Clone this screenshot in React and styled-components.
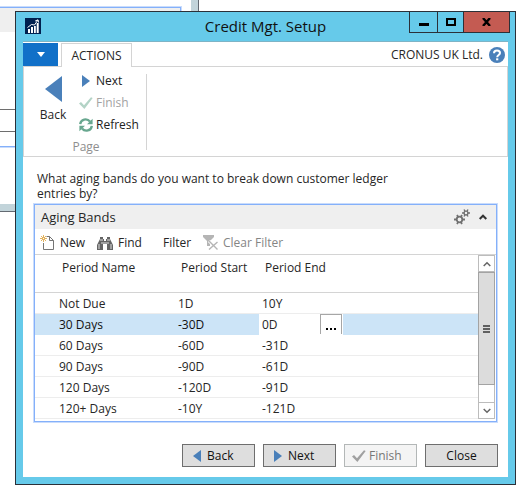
import React, { useState } from "react";
import styled, { createGlobalStyle, css } from "styled-components";

const GlobalStyle = createGlobalStyle`
  *, *::before, *::after { box-sizing: border-box; }
  body {
    margin: 0;
    background: #fff;
    color: #262626;
    font-family: "Open Sans", "Noto Sans", "Liberation Sans", sans-serif;
    font-size: 12px;
    line-height: 15px;
  }
  button, input { font: inherit; color: inherit; margin: 0; }
  svg { display: block; flex: none; }
`;

const Desktop = styled.div`
  position: relative;
  min-height: 100vh;
  padding: 11px 2px 11px 15px;
`;

/* Parent window, partly covered by the dialog */
const ParentWindow = styled.div`
  position: absolute;
  top: 0;
  left: 0;
  width: 199px;
  height: 212px;
  padding-top: 7px;
  border: solid #636a72;
  border-width: 0 1px 1px 0;
  box-shadow: inset -7px -7px 0 #c2d4da;
`;

const ParentPanel = styled.div`
  width: 181px;
  height: 140px;
  border: solid #84b0fa;
  border-width: 1px 1px 1px 0;
  box-shadow: 0 0 0 1px #c9dcfc;
`;

const ParentPanelHeader = styled.div`
  height: 24px;
  background: #efefef;
`;

const ParentField = styled.div`
  height: 23px;
  margin-top: 77px;
  border: solid #6e6e6e;
  border-width: 1px 0;
`;

const Dialog = styled.section`
  position: relative;
  display: flex;
  flex-direction: column;
  border: 1px solid #2b3038;
  background: #66caea;
  padding: 0 7px 7px;
`;

const TitleBar = styled.header`
  display: grid;
  grid-template-columns: 1fr auto 1fr;
  height: 29px;
`;

const AppIcon = styled.span`
  padding: 6px 2px;
`;

const Title = styled.h1`
  margin: 0;
  font-size: 15px;
  font-weight: 400;
  line-height: 29px;
  color: #111;
`;

const WindowButtons = styled.div`
  display: flex;
  justify-self: end;
  height: 21px;
  margin-right: -2px;
  border: solid #2b3038;
  border-width: 0 1px 1px;
`;

const WindowButton = styled.button`
  display: flex;
  align-items: center;
  justify-content: center;
  width: ${(p) => p.$width}px;
  padding: 0;
  border: solid #2b3038;
  border-width: 0 0 0 ${(p) => (p.$first ? 0 : 1)}px;
  background: ${(p) => (p.$close ? "#c45b52" : "transparent")};
`;

const Content = styled.div`
  display: flex;
  flex-direction: column;
  background: #fff;
  border-top: 1px solid #7eb4c6;
`;

const TabRow = styled.div`
  display: flex;
  align-items: flex-end;
  height: 24px;
`;

const FileMenu = styled.button`
  display: flex;
  align-items: center;
  justify-content: center;
  width: 35px;
  height: 23px;
  margin-right: 3px;
  padding: 0;
  border: 0;
  background: #1170c8;
`;

const Tab = styled.button`
  width: 71px;
  height: 24px;
  margin-bottom: -1px;
  padding: 0;
  border: 1px solid #d4d4d4;
  border-bottom: 0;
  background: #fff;
  z-index: 1;
`;

const Company = styled.div`
  display: flex;
  align-items: center;
  gap: 6px;
  height: 23px;
  margin-left: auto;
  padding-right: 3px;
`;

const HelpButton = styled.button`
  padding: 0;
  border: 0;
  background: none;
`;

const Ribbon = styled.div`
  display: flex;
  height: 91px;
  padding: 7px 0 6px;
  border: 1px solid #d4d4d4;
`;

const RibbonGroup = styled.fieldset`
  display: grid;
  grid-template-columns: 52px auto;
  grid-template-rows: 66px auto;
  width: 123px;
  margin: 0;
  padding: 0;
  border: 0;
  border-right: 1px solid #d4d4d4;
`;

const RibbonLabel = styled.span`
  grid-column: 1 / -1;
  line-height: 13px;
  padding-left: 2px;
  text-align: center;
  color: #8e8e8e;
`;

const LargeAction = styled.button`
  display: flex;
  flex-direction: column;
  align-items: center;
  gap: 5px;
  padding: 2px 0 0 6px;
  border: 0;
  background: none;
`;

const SmallActions = styled.div`
  display: flex;
  flex-direction: column;
`;

const SmallAction = styled.button`
  display: flex;
  align-items: center;
  gap: 3px;
  height: 22px;
  padding: 0 0 8px 2px;
  border: 0;
  background: none;
  line-height: 14px;
  color: ${(p) => (p.disabled ? "#a3a3a3" : "#222")};
`;

const IconSlot = styled.span`
  display: flex;
  justify-content: center;
  width: 15px;
`;

const Body = styled.main`
  padding: 14px 10px 10px;
`;

const Question = styled.p`
  max-width: 360px;
  margin: 0 0 3px;
  padding-left: 4px;
`;

const Panel = styled.section`
  border: 1px solid #84b0fa;
  margin: 0 1px;
  box-shadow: 0 0 0 1px #c9dcfc;
`;

const PanelHeader = styled.header`
  display: flex;
  align-items: center;
  height: 24px;
  padding: 0 9px 0 6px;
  background: #efefef;
`;

const PanelTitle = styled.h2`
  margin: 0 auto 0 0;
  font-size: 13px;
  font-weight: 400;
  line-height: 22px;
`;

const IconButton = styled.button`
  display: flex;
  align-items: center;
  margin-left: 9px;
  padding: 0;
  border: 0;
  background: none;
`;

const Toolbar = styled.div`
  display: flex;
  align-items: center;
  height: 26px;
  padding: 2px 0 0 5px;
  border-bottom: 1px solid #d4d4d4;
`;

const ToolButton = styled.button`
  display: flex;
  align-items: center;
  gap: 5px;
  width: ${(p) => p.$width}px;
  padding: 0;
  border: 0;
  background: none;
  white-space: nowrap;
  color: ${(p) => (p.disabled ? "#858585" : "#262626")};
`;

const GridArea = styled.div`
  display: flex;
  align-items: flex-start;
  padding: 0 1px 2px 0;
`;

const BandTable = styled.table`
  flex: 1;
  width: 100%;
  table-layout: fixed;
  border-collapse: separate;
  border-spacing: 0;
`;

const Column = styled.col`
  width: ${(p) => (p.$width ? `${p.$width}px` : "auto")};
`;

const HeadCell = styled.th`
  height: 38px;
  padding: 5px 0 0 ${(p) => (p.$first ? 27 : 6)}px;
  border-bottom: 1px solid #d4d4d4;
  font-weight: 400;
  text-align: left;
  vertical-align: top;
`;

const Cell = styled.td`
  height: 21px;
  padding: 0 0 0 ${(p) => (p.$first ? 24 : 3)}px;
  border-bottom: 1px solid #ededed;
  ${(p) =>
    p.$selected &&
    css`
      background: #cce4f7;
      border-color: #cce4f7;
      color: #111;
    `}
  ${(p) =>
    p.$editing &&
    css`
      padding: 0;
      background: #fff;
      border-color: #fff;
    `}
`;

const Editor = styled.div`
  display: flex;
  height: 20px;
`;

const EditInput = styled.input`
  flex: 1;
  min-width: 0;
  padding: 0 0 0 3px;
  border: 0;
  outline: 0;
  background: transparent;
`;

const LookupButton = styled.button`
  display: flex;
  align-items: flex-end;
  justify-content: center;
  width: 22px;
  margin: 0 1px 0 0;
  padding: 0 0 4px;
  border: 1px solid #a6a6a6;
  border-bottom: 0;
  background: #fff;
`;

const ScrollBar = styled.div`
  display: flex;
  flex-direction: column;
  align-self: stretch;
  width: 17px;
  background: #fff;
  border: solid #bcbcbc;
  border-width: 0 1px;
`;

const ScrollButton = styled.button`
  display: flex;
  align-items: center;
  justify-content: center;
  height: 17px;
  padding: 0;
  border: solid #bcbcbc;
  border-width: 1px 0;
  background: #fff;
`;

const ScrollThumb = styled.div`
  display: flex;
  align-items: center;
  justify-content: center;
  height: 113px;
  margin: 0 -1px auto;
  border: 1px solid #a3a3a3;
  background: #dcdcdc;
`;

const Footer = styled.footer`
  display: flex;
  justify-content: flex-end;
  gap: 8px;
  margin-top: 22px;
`;

const FooterButton = styled.button`
  display: flex;
  align-items: center;
  justify-content: ${(p) => (p.$plain ? "center" : "flex-start")};
  gap: 3px;
  width: 73px;
  height: 23px;
  padding: 0 ${(p) => (p.$plain ? 0 : 6)}px;
  border: 1px solid ${(p) => (p.disabled ? "#b3b7b7" : "#6e6e6e")};
  background: ${(p) => (p.disabled ? "#f4f4f4" : "#dedede")};
  color: ${(p) => (p.disabled ? "#777" : "#111")};
`;

const Triangle = ({ size, left }) => (
  <svg width={size === 26 ? 17 : 8} height={size} viewBox="0 0 8 12" preserveAspectRatio="none" fill="#4a80ba">
    <path d={left ? "M8 0v12L0 6z" : "M0 0v12l8-6z"} />
  </svg>
);

const Check = ({ color }) => (
  <svg width="14" height="12" viewBox="0 0 14 12" fill={color}>
    <path d="M0 6.5 2 5l3 3.2L12 .2 13.7 1 5.4 12z" />
  </svg>
);

const AppLogo = () => (
  <svg width="16" height="16" viewBox="0 0 16 16">
    <path fill="#00204f" d="M0 0h16v16H0z" />
    <path fill="#fff" d="M3 11h2v4H3zM6 9h2v6H6zM9 8h1.8v7H9zM11.7 5h2v10h-2z" />
    <path fill="none" stroke="#fff" d="m2.5 9.5 4-3 3 .5 3.5-5M10.2 3 13 1.8l.6 2.7" />
  </svg>
);

const HelpIcon = () => (
  <svg width="16" height="16" viewBox="0 0 16 16">
    <circle cx="8" cy="8" r="8" fill="#4a80ba" />
    <path fill="none" stroke="#fff" strokeWidth="2" d="M5 6.2C5 2.5 11 2.7 11 6c0 2-2.8 2-2.8 4.2" />
    <path fill="#fff" d="M7.1 11.3h2.2v2H7.1z" />
  </svg>
);

const RefreshIcon = () => (
  <svg width="14" height="14" viewBox="0 0 14 14">
    <g fill="none" stroke="#68a78f" strokeWidth="2.3">
      <path d="M1.2 6.2C1.7 1 8-.1 11 3.5" />
      <path d="M12.8 7.8C12.3 13 6 14.1 3 10.5" />
    </g>
    <path fill="#68a78f" d="M13.6.8v5.5H8zM.4 13.2V7.7H6z" />
  </svg>
);

const NewIcon = () => (
  <svg width="15" height="16" viewBox="0 0 15 16">
    <path fill="none" stroke="#757575" d="M3.5 8v6.5h10v-9l-4-4h-3M9.5 1.5v4h4" />
    <path fill="none" stroke="#e3b35f" d="M3.5 0v7M0 3.5h7M1 1l5 5M6 1 1 6" />
    <path fill="#fff" d="M3 3h1v1H3z" />
  </svg>
);

const FindIcon = () => (
  <svg width="16" height="14" viewBox="0 0 16 14">
    <path fill="#646464" d="M3 1h3v2h1v2h2V3h1V1h3v2l1 2 2 4v5h-6V8H6v6H0V9l2-4 1-2z" />
    <path fill="none" stroke="#fff" strokeWidth=".8" d="M2 8v5M14 8v5M3 4h3M10 4h3M6 7h4M5 6v2M11 6v2" />
  </svg>
);

const ClearFilterIcon = () => (
  <svg width="15" height="15" viewBox="0 0 15 15">
    <path fill="#b5b5b5" d="M0 0h11v2L7 6v5H4V6L0 2z" />
    <path fill="none" stroke="#fff" strokeWidth="3" d="m6 6 8.5 8.5M14.5 7 6 14.5" />
    <path fill="none" stroke="#b5b5b5" strokeWidth="1.4" d="m6 6 8.5 8.5M14.5 7 6 14.5" />
  </svg>
);

const GearsIcon = () => (
  <svg width="16" height="16" viewBox="0 0 16 16" fill="none" stroke="#707070">
    <circle cx="5.5" cy="10.5" r="2.8" strokeWidth="1.8" />
    <path strokeWidth="1.8" d="M0 10.5h2.5M8.5 10.5H11M3 6l1.2 2M8 6 6.8 8M3 15l1.2-2M8 15l-1.2-2" />
    <circle cx="12" cy="4" r="1.9" strokeWidth="1.4" />
    <path strokeWidth="1.4" d="M8 4h2M14 4h2M10 .5l1 1.7M14 .5l-1 1.7M10 7.5l1-1.7M14 7.5l-1-1.7" />
  </svg>
);

const Chevron = ({ down, bold }) => (
  <svg width="8" height="6" viewBox="0 0 8 6" fill="none" stroke={bold ? "#333" : "#666"} strokeWidth={bold ? 2 : 1.5}>
    <path d={down ? "m.7 1 3.3 3.3L7.3 1" : "M.7 5 4 1.7 7.3 5"} />
  </svg>
);

const BANDS = [
  { name: "Not Due", start: "1D", end: "10Y" },
  { name: "30 Days", start: "-30D", end: "0D" },
  { name: "60 Days", start: "-60D", end: "-31D" },
  { name: "90 Days", start: "-90D", end: "-61D" },
  { name: "120 Days", start: "-120D", end: "-91D" },
  { name: "120+ Days", start: "-10Y", end: "-121D" },
];

function BandRow({ band, selected }) {
  const [end, setEnd] = useState(band.end);
  return (
    <tr aria-selected={selected}>
      <Cell $first $selected={selected}>{band.name}</Cell>
      <Cell $selected={selected}>{band.start}</Cell>
      <Cell $editing={selected}>
        {selected ? (
          <Editor>
            <EditInput aria-label="Period End" value={end} onChange={(e) => setEnd(e.target.value)} />
            <LookupButton aria-label="Look up">
              <svg width="10" height="2" viewBox="0 0 10 2">
                <path d="M0 0h2v2H0zM4 0h2v2H4zM8 0h2v2H8z" />
              </svg>
            </LookupButton>
          </Editor>
        ) : (
          end
        )}
      </Cell>
      <Cell $selected={selected} />
    </tr>
  );
}

export default function App() {
  return (
    <>
      <GlobalStyle />
      <Desktop>
        <ParentWindow aria-hidden="true">
          <ParentPanel>
            <ParentPanelHeader />
            <ParentField />
          </ParentPanel>
        </ParentWindow>
        <Dialog role="dialog" aria-labelledby="dialog-title">
          <TitleBar>
            <AppIcon><AppLogo /></AppIcon>
            <Title id="dialog-title">Credit Mgt. Setup</Title>
            <WindowButtons>
              <WindowButton $first $width={27} aria-label="Minimize">
                <svg width="10" height="10" viewBox="0 0 10 10"><path d="M0 6h10v3H0z" /></svg>
              </WindowButton>
              <WindowButton $width={26} aria-label="Maximize">
                <svg width="10" height="8" viewBox="0 0 10 8" fill="none" stroke="#000" strokeWidth="2"><path d="M1 1h8v6H1z" /></svg>
              </WindowButton>
              <WindowButton $close $width={46} aria-label="Close window">
                <svg width="9" height="8" viewBox="0 0 9 8" fill="none" stroke="#000" strokeWidth="2.4"><path d="m1 0 7 8M8 0 1 8" /></svg>
              </WindowButton>
            </WindowButtons>
          </TitleBar>
          <Content>
            <TabRow>
              <FileMenu aria-label="Application menu">
                <svg width="8" height="5" viewBox="0 0 8 5" fill="#fff"><path d="M0 0h8L4 5z" /></svg>
              </FileMenu>
              <Tab>ACTIONS</Tab>
              <Company>
                CRONUS UK Ltd.
                <HelpButton aria-label="Help"><HelpIcon /></HelpButton>
              </Company>
            </TabRow>
            <Ribbon>
              <RibbonGroup aria-label="Page">
                <LargeAction><Triangle left size={26} />Back</LargeAction>
                <SmallActions>
                  <SmallAction><IconSlot><Triangle size={12} /></IconSlot>Next</SmallAction>
                  <SmallAction disabled><IconSlot><Check color="#b3d3c6" /></IconSlot>Finish</SmallAction>
                  <SmallAction><IconSlot><RefreshIcon /></IconSlot>Refresh</SmallAction>
                </SmallActions>
                <RibbonLabel>Page</RibbonLabel>
              </RibbonGroup>
            </Ribbon>
            <Body>
              <Question>What aging bands do you want to break down customer ledger entries by?</Question>
              <Panel aria-labelledby="panel-title">
                <PanelHeader>
                  <PanelTitle id="panel-title">Aging Bands</PanelTitle>
                  <IconButton aria-label="Customize"><GearsIcon /></IconButton>
                  <IconButton aria-label="Collapse"><Chevron bold /></IconButton>
                </PanelHeader>
                <Toolbar>
                  <ToolButton $width={57}><NewIcon />New</ToolButton>
                  <ToolButton $width={66}><FindIcon />Find</ToolButton>
                  <ToolButton $width={40}>Filter</ToolButton>
                  <ToolButton disabled $width={80}><ClearFilterIcon />Clear Filter</ToolButton>
                </Toolbar>
                <GridArea>
                  <BandTable>
                    <colgroup>
                      <Column $width={140} />
                      <Column $width={84} />
                      <Column $width={84} />
                      <Column />
                    </colgroup>
                    <thead>
                      <tr>
                        <HeadCell $first>Period Name</HeadCell>
                        <HeadCell>Period Start</HeadCell>
                        <HeadCell>Period End</HeadCell>
                        <HeadCell aria-label="Empty" />
                      </tr>
                    </thead>
                    <tbody>
                      {BANDS.map((band, i) => (
                        <BandRow key={band.name} band={band} selected={i === 1} />
                      ))}
                    </tbody>
                  </BandTable>
                  <ScrollBar>
                    <ScrollButton aria-label="Scroll up"><Chevron /></ScrollButton>
                    <ScrollThumb>
                      <svg width="7" height="8" viewBox="0 0 7 8" fill="#606060"><path d="M0 0h7v2H0zM0 3h7v2H0zM0 6h7v2H0z" /></svg>
                    </ScrollThumb>
                    <ScrollButton aria-label="Scroll down"><Chevron down /></ScrollButton>
                  </ScrollBar>
                </GridArea>
              </Panel>
              <Footer>
                <FooterButton><IconSlot><Triangle left size={12} /></IconSlot>Back</FooterButton>
                <FooterButton><IconSlot><Triangle size={12} /></IconSlot>Next</FooterButton>
                <FooterButton disabled><IconSlot><Check color="#a0a0a0" /></IconSlot>Finish</FooterButton>
                <FooterButton $plain>Close</FooterButton>
              </Footer>
            </Body>
          </Content>
        </Dialog>
      </Desktop>
    </>
  );
}
